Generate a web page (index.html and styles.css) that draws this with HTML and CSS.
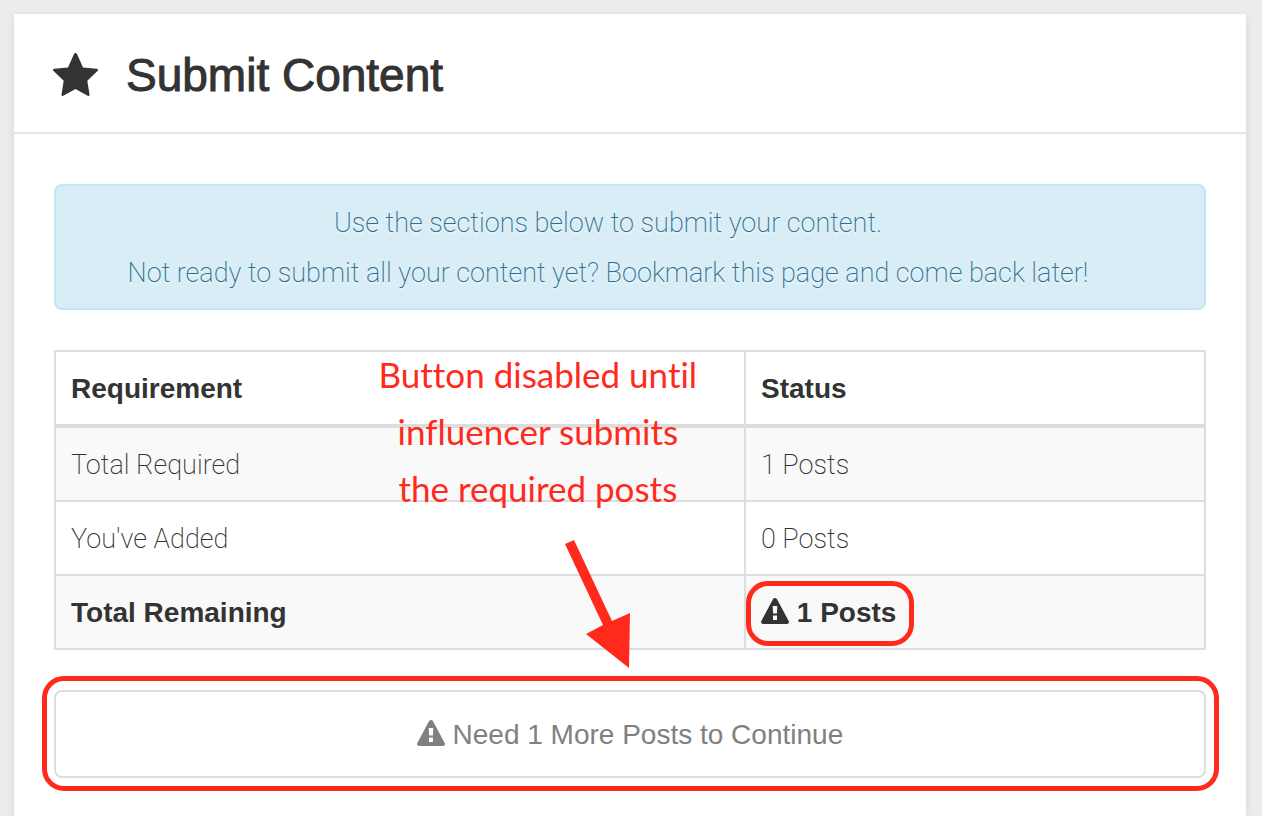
FILE: index.html
```html
<!doctype html>
<html lang="en">
<head>
<meta charset="utf-8">
<title>Submit Content</title>
<link rel="stylesheet" href="styles.css">
</head>
<body>
<svg class="defs" aria-hidden="true">
	<symbol id="warning" viewBox="0 0 28 26">
		<path fill-rule="evenodd" d="M14 0c.8 0 1.500.4 1.900 1.100l11.800 21.900c.8 1.500-.2 3-1.900 3H2.200C.5 26-.5 24.500.3 23L12.100 1.100C12.500.4 13.200 0 14 0zM11.700 8l.4 7.500h3.800l.4-7.500zM12 17.500V22h4v-4.500z"/>
	</symbol>
</svg>
<main class="card">
	<header class="card-header">
		<svg class="star" viewBox="0 0 45 43" aria-hidden="true">
			<path d="M22.500 0c.7 0 1.200.4 1.600 1.200L30 14.500l13.600 1.300c1.500.2 1.900 1.300.8 2.300L34.300 27.800l2.200 13.600c.2 1.300-.6 1.900-1.800 1.300L22.500 36 10.300 42.700c-1.200.6-2 0-1.800-1.300l2.200-13.600L.6 18.100c-1.100-1-.7-2.100.8-2.300L15 14.500l5.900-13.300c.4-.8.9-1.200 1.600-1.200z"/>
		</svg>
		<h1>Submit Content</h1>
	</header>
	<div class="card-body">
		<div class="alert">
			<p>Use the sections below to submit your content.</p>
			<p>Not ready to submit all your content yet? Bookmark this page and come back later!</p>
		</div>

		<div class="requirements">
			<table>
				<thead>
					<tr><th class="name">Requirement</th><th>Status</th></tr>
				</thead>
				<tbody>
					<tr><td>Total Required</td><td>1 Posts</td></tr>
					<tr><td>You've Added</td><td>0 Posts</td></tr>
					<tr class="total">
						<td>Total Remaining</td>
						<td><span class="remaining"><svg class="icon" aria-hidden="true"><use href="#warning"/></svg> 1 Posts</span></td>
					</tr>
				</tbody>
			</table>
			<p class="note">Button disabled until<br>influencer submits<br>the required posts</p>
			<svg class="arrow" viewBox="0 0 46 128" aria-hidden="true">
				<path d="M0 4l9-4 38 81 18-8-1 55-43-34 17-9z"/>
			</svg>
		</div>

		<div class="action">
			<button type="button" disabled><svg class="icon" aria-hidden="true"><use href="#warning"/></svg> Need 1 More Posts to Continue</button>
		</div>
	</div>
</main>
</body>
</html>
```

FILE: styles.css
```css
* {
	box-sizing: border-box;
}
body {
	margin: 0;
	padding: 14px 16px 0 14px;
	background: #ededed;
	font-family: Roboto, sans-serif;
	font-size: 27px;
	font-weight: 200;
	color: #333;
}
h1, p {
	margin: 0;
}
.defs {
	position: absolute;
	width: 0;
	height: 0;
}
.card {
	min-height: calc(100vh - 14px);
	background: #fff;
	box-shadow: 0 2px 8px rgba(0, 0, 0, 0.1);
}
.card-header {
	display: flex;
	align-items: center;
	gap: 28px;
	height: 120px;
	padding: 3px 39px 0;
	border-bottom: 2px solid #e5e5e5;
}
.star {
	width: 45px;
	height: 43px;
	fill: #333;
}
h1 {
	font-family: "Liberation Sans", Arial, sans-serif;
	font-size: 46px;
	line-height: 50px;
	font-weight: normal;
	-webkit-text-stroke: 1px #333;
}
.card-body {
	padding: 50px 40px 30px;
}
.alert {
	padding: 12px 60px 10px 16px;
	border: 2px solid #bce8f1;
	border-radius: 8px;
	background: #d9edf7;
	color: #31708f;
	line-height: 50px;
	text-align: center;
	text-shadow: 0 2px 0 rgba(255, 255, 255, 0.5);
}
.requirements {
	position: relative;
	margin: 40px 0;
}
table {
	width: 100%;
	border-collapse: collapse;
	line-height: 40px;
}
th, td {
	height: 74px;
	padding: 17px 15px 15px;
	border: 2px solid #ddd;
	text-align: left;
}
th {
	height: 75px;
	border-bottom-width: 4px;
}
th, .total td {
	font-family: "Liberation Sans", Arial, sans-serif;
	font-size: 28px;
	font-weight: bold;
}
.name {
	width: 60%;
}
tbody tr:nth-child(odd) {
	background: #f9f9f9;
}
.icon {
	width: 28px;
	height: 26px;
	fill: currentColor;
	vertical-align: -2px;
}
.remaining, .action {
	position: relative;
}
/* red highlight rings */
.remaining::after, .action::after {
	content: "";
	position: absolute;
	border: 5px solid #ff2a1c;
	border-radius: 22px;
	pointer-events: none;
}
.remaining::after {
	inset: -16px -18px -18px -15px;
}
.action::after {
	inset: -14px -13px -13px -12px;
}
.note {
	position: absolute;
	top: -4px;
	left: 25%;
	width: 34%;
	color: #ff2a1c;
	font-family: Lato, sans-serif;
	font-size: 35px;
	font-weight: 400;
	font-variant-ligatures: none;
	line-height: 57px;
	text-align: center;
}
.arrow {
	position: absolute;
	top: 190px;
	left: 511px;
	width: 46px;
	height: 128px;
	overflow: visible;
	fill: #ff2a1c;
}
button {
	display: block;
	width: 100%;
	height: 88px;
	padding: 2px 16px 0;
	border: 2px solid #ddd;
	border-radius: 8px;
	background: #fff;
	color: #808080;
	font-family: "Liberation Sans", Arial, sans-serif;
	font-size: 28px;
}
```
